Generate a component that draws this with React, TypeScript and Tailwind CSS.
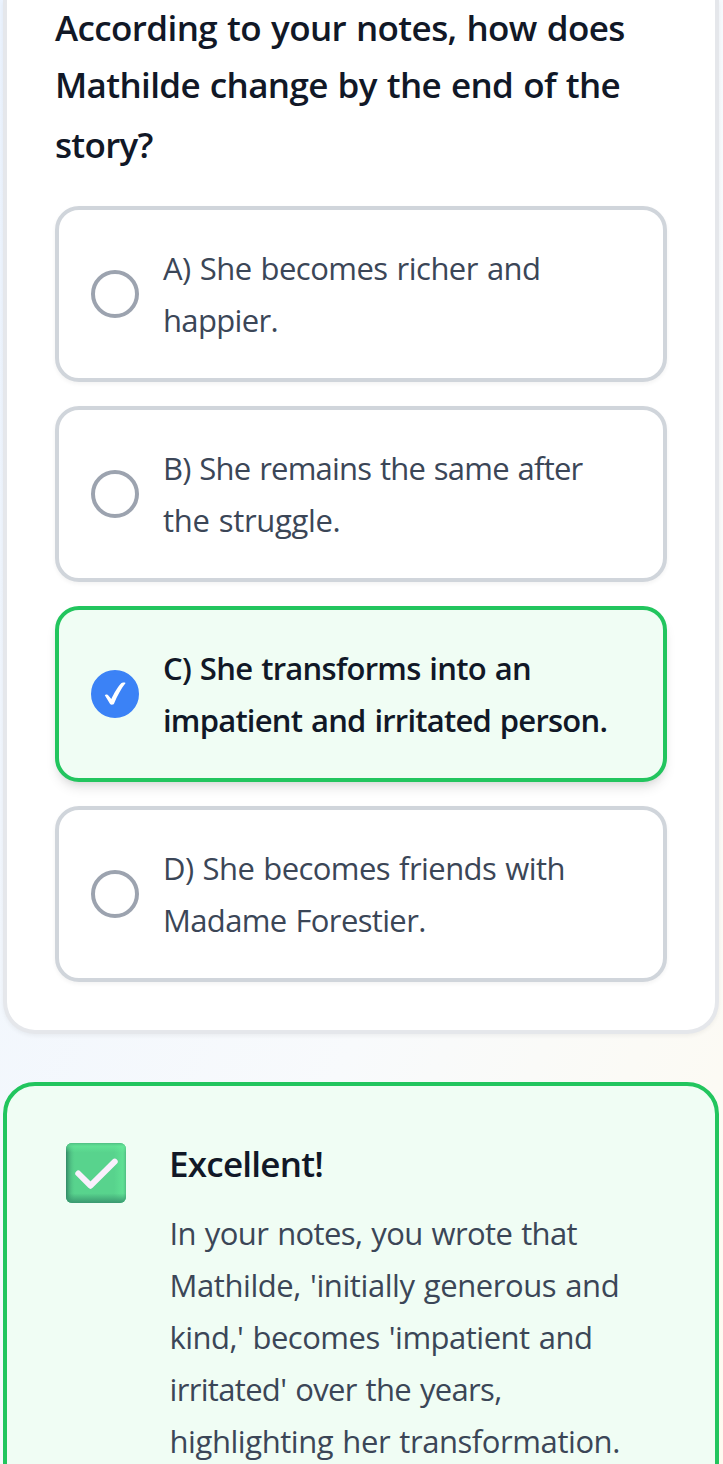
import clsx from 'clsx';
import React from 'react';

type Line = { text: string; tracking: string };

type Option = {
  id: string;
  lines: Line[];
  selected?: boolean;
};

const question: Line[] = [
  { text: 'According to your notes, how does', tracking: 'tracking-[-0.61px] leading-[55px]' },
  { text: 'Mathilde change by the end of the', tracking: 'tracking-[-0.65px] leading-[60px]' },
  { text: 'story?', tracking: 'tracking-[-0.7px] leading-[60px]' },
];

const options: Option[] = [
  {
    id: 'a',
    lines: [
      { text: 'A) She becomes richer and', tracking: 'tracking-[-0.53px]' },
      { text: 'happier.', tracking: 'tracking-[-0.65px]' },
    ],
  },
  {
    id: 'b',
    lines: [
      { text: 'B) She remains the same after', tracking: 'tracking-[-0.79px]' },
      { text: 'the struggle.', tracking: 'tracking-[-0.32px]' },
    ],
  },
  {
    id: 'c',
    selected: true,
    lines: [
      { text: 'C) She transforms into an', tracking: 'tracking-[-0.72px]' },
      { text: 'impatient and irritated person.', tracking: 'tracking-[-0.78px]' },
    ],
  },
  {
    id: 'd',
    lines: [
      { text: 'D) She becomes friends with', tracking: 'tracking-[-0.56px]' },
      { text: 'Madame Forestier.', tracking: 'tracking-[-0.64px]' },
    ],
  },
];

const feedback: Line[] = [
  { text: 'In your notes, you wrote that', tracking: 'tracking-[-0.62px]' },
  { text: "Mathilde, 'initially generous and", tracking: 'tracking-[-0.42px]' },
  { text: "kind,' becomes 'impatient and", tracking: 'tracking-[-0.5px]' },
  { text: "irritated' over the years,", tracking: 'tracking-[-0.67px]' },
  { text: 'highlighting her transformation.', tracking: 'tracking-[-0.43px]' },
];

const Lines = ({ lines }: { lines: Line[] }) => (
  <>
    {lines.map((line) => (
      <span key={line.text} className={clsx('block whitespace-nowrap [word-spacing:1.5px]', line.tracking)}>
        {line.text}
      </span>
    ))}
  </>
);

const Radio = ({ selected }: { selected?: boolean }) => (
  <span
    className={clsx(
      'flex size-12 shrink-0 items-center justify-center rounded-full border-4',
      selected ? 'border-[#3b82f6] bg-[#3b82f6]' : 'border-[#9ca3af] bg-white'
    )}
  >
    {selected && (
      <svg viewBox="0 0 24 24" className="size-6 shrink-0" fill="#fff">
        <path d="M1.800 13.200c.9-1.200 3-.7 3.800.5l2.700 3.400C10.800 11.800 14.400 5.200 18 1.500c.9-.9 3.500-1.200 4.600-.5C18.100 6.700 14 14.300 11.100 21.500c-.6 1.400-3.100 1.600-4 .4z" />
      </svg>
    )}
  </span>
);

const OptionCard = ({ option }: { option: Option }) => (
  <button
    type="button"
    className={clsx(
      'flex h-44 w-full items-center gap-6 rounded-3xl border-4 px-8 text-left text-[31px] leading-[52px]',
      option.selected
        ? 'border-[#22c55e] bg-[#f0fdf4] font-semibold text-[#111827] shadow-[0_8px_12px_-2px_rgb(0_0_0/0.1),0_4px_8px_-4px_rgb(0_0_0/0.1)]'
        : 'border-[#d0d5db] bg-white text-[#3b4657] shadow-[0_2px_4px_0_rgb(0_0_0/0.05)]'
    )}
  >
    <Radio selected={option.selected} />
    <span className="block">
      <Lines lines={option.lines} />
    </span>
  </button>
);

const CheckBadge = () => (
  <svg viewBox="0 0 60 60" className="size-[60px] shrink-0">
    <defs>
      <linearGradient id="badge-left" x1="0" x2="1" y1="0" y2="0">
        <stop offset="0" stopColor="#338766" />
        <stop offset="0.06" stopColor="#44aa78" stopOpacity="0.7" />
        <stop offset="0.16" stopColor="#58d38d" stopOpacity="0" />
        <stop offset="0.8" stopColor="#68ee9b" stopOpacity="0" />
        <stop offset="0.94" stopColor="#68ee9b" stopOpacity="0.45" />
        <stop offset="1" stopColor="#4fbd82" />
      </linearGradient>
      <linearGradient id="badge-top" x1="0" x2="0" y1="0" y2="1">
        <stop offset="0" stopColor="#4fbd82" />
        <stop offset="0.06" stopColor="#68ee9b" stopOpacity="0.5" />
        <stop offset="0.16" stopColor="#68ee9b" stopOpacity="0" />
        <stop offset="0.84" stopColor="#3a9870" stopOpacity="0" />
        <stop offset="1" stopColor="#3a9870" />
      </linearGradient>
    </defs>
    <rect width="60" height="60" rx="6" fill="#58d38d" />
    <rect width="60" height="60" rx="6" fill="url(#badge-left)" />
    <rect width="60" height="60" rx="6" fill="url(#badge-top)" />
    <path
      d="M12.300 30.500 24.500 42.700 48.700 18.700"
      fill="none"
      stroke="#faf0fd"
      strokeWidth="6"
      strokeLinecap="round"
      strokeLinejoin="round"
    />
  </svg>
);

export default function App() {
  return (
    <div className="h-[1464px] overflow-hidden bg-linear-to-br from-[#ebf3fe] via-[#f8fafc] via-60% to-[#fefaf0] pr-1 pl-[3px] font-['Open_Sans',sans-serif]">
      {/* Question */}
      <section className="h-[1034px] rounded-b-[32px] border-4 border-t-0 border-[#e5e7eb] bg-white px-12 shadow-[0_2px_4px_0_rgb(0_0_0/0.05)]">
        <h2 className="h-[206px] text-[35px] font-semibold text-[#111827]">
          <Lines lines={question} />
        </h2>
        <div className="flex flex-col gap-6">
          {options.map((option) => (
            <OptionCard key={option.id} option={option} />
          ))}
        </div>
      </section>

      {/* Feedback */}
      <section className="mt-12 flex h-[460px] items-start gap-11 rounded-t-[32px] border-4 border-[#22c55e] bg-[#f0fdf4] pt-[57px] pl-[59px]">
        <CheckBadge />
        <div className="-mt-[7px] -ml-px">
          <h3 className="h-[71px] text-[35px] leading-[56px] font-semibold text-[#111827]">
            <Lines lines={[{ text: 'Excellent!', tracking: 'tracking-[-0.75px]' }]} />
          </h3>
          <p className="pl-[0.5px] text-[31px] leading-[52px] text-[#3b4657]">
            <Lines lines={feedback} />
          </p>
        </div>
      </section>
    </div>
  );
}
